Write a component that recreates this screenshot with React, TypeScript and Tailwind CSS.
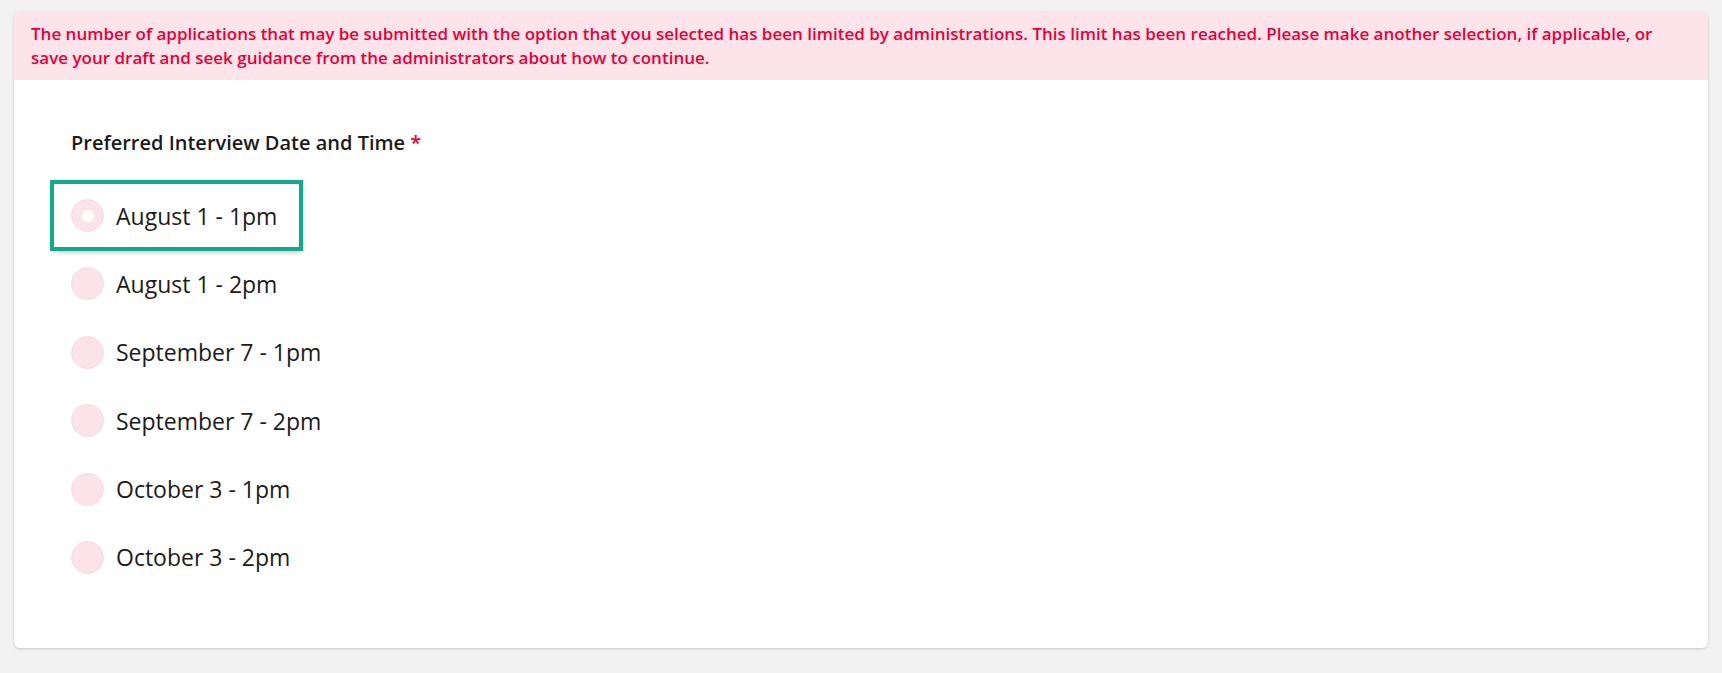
const options = [
  'August 1 - 1pm',
  'August 1 - 2pm',
  'September 7 - 1pm',
  'September 7 - 2pm',
  'October 3 - 1pm',
  'October 3 - 2pm',
];

function Radio({ focused }: { focused: boolean }) {
  return (
    <span className="flex h-[33px] w-[33px] shrink-0 items-center justify-center rounded-full border border-[#f6dbe2] bg-[#fbe3e9]">
      {focused && <span className="h-[12px] w-[12px] rounded-full bg-white" />}
    </span>
  );
}

export default function App() {
  return (
    <div className="min-h-screen bg-[#f2f2f2] pt-[12px] pb-[24px] px-[14px] font-['Open_Sans',sans-serif]">
      <div className="overflow-hidden rounded-md bg-white shadow-[0_1px_3px_rgba(0,0,0,0.18)]">
        {/* error banner */}
        <div className="bg-[#fce4ea] px-[17px] pt-[10px] pb-[10px] text-[17px] font-semibold leading-[24px] text-[#e5003c]">
          The number of applications that may be submitted with the option that you selected has been limited by
          administrations. This limit has been reached. Please make another selection, if applicable, or save your
          draft and seek guidance from the administrators about how to continue.
        </div>

        <div className="px-[57px] pt-[49px] pb-[59px]">
          <div className="text-[20px] font-semibold leading-[28px] text-[#1b1b1b]">
            Preferred Interview Date and Time <span className="text-[#e5003c]">*</span>
          </div>

          <div className="mt-[27px] ml-[-17px] flex flex-col items-start gap-[5.4px]">
            {options.map((opt, i) => (
              <label
                key={opt}
                className={`flex h-[63px] cursor-pointer items-center gap-[12px] pl-[17px] pr-[22px] ${
                  i === 0
                    ? 'outline-4 outline-solid outline-[#14a98a] shadow-[2px_4px_6px_rgba(0,0,0,0.35)]'
                    : ''
                }`}
              >
                <Radio focused={i === 0} />
                <span className="text-[23px] leading-[30px] text-[#1b1b1b]">{opt}</span>
              </label>
            ))}
          </div>
        </div>
      </div>
    </div>
  );
}
